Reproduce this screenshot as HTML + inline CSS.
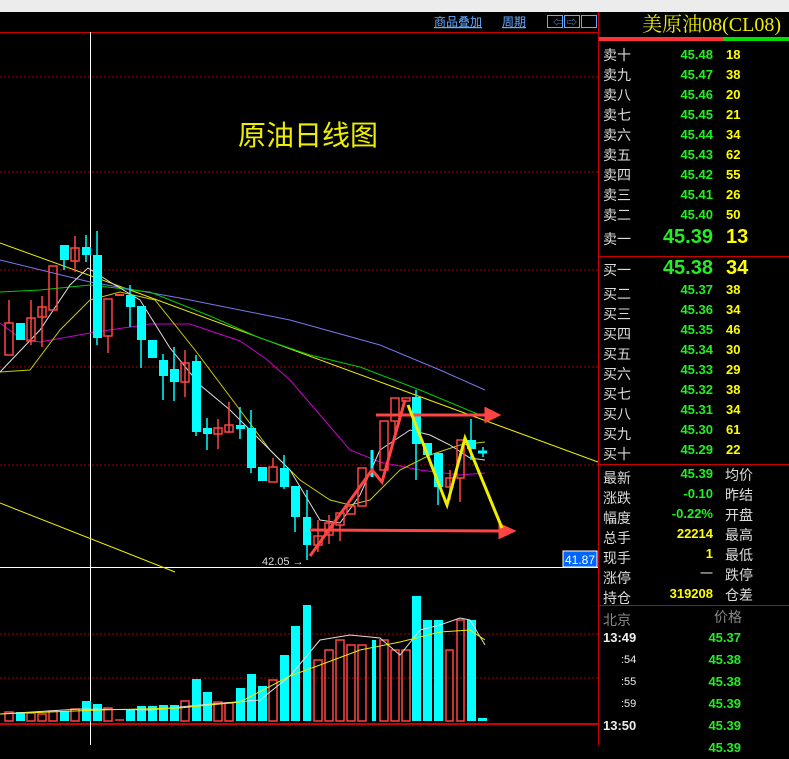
<!DOCTYPE html><html><head><meta charset="utf-8"><style>
body{margin:0;width:789px;height:745px;background:#000;overflow:hidden;font-family:"Liberation Sans","Noto Sans CJK SC",sans-serif}
</style></head><body>
<svg width="789" height="745" style="position:absolute;left:0;top:0" xmlns="http://www.w3.org/2000/svg">
<rect x="0" y="0" width="789" height="12" fill="#ececec"/>
<g stroke="#a00" stroke-dasharray="2,2" stroke-width="1">
<line x1="0" y1="77" x2="598" y2="77"/><line x1="0" y1="172" x2="598" y2="172"/><line x1="0" y1="270" x2="598" y2="270"/><line x1="0" y1="367" x2="598" y2="367"/><line x1="0" y1="465" x2="598" y2="465"/><line x1="0" y1="634" x2="598" y2="634"/><line x1="0" y1="678" x2="598" y2="678"/></g>
<line x1="0" y1="32.5" x2="598" y2="32.5" stroke="#c00"/>
<line x1="598.5" y1="12" x2="598.5" y2="745" stroke="#c00"/>
<line x1="0" y1="567.5" x2="598" y2="567.5" stroke="#fff"/>
<line x1="0" y1="724" x2="598" y2="724" stroke="#c00" stroke-width="2"/>
<line x1="90.5" y1="32" x2="90.5" y2="745" stroke="#fff"/>
<text x="434" y="26" fill="#6af" font-size="12" text-decoration="underline">商品叠加</text>
<text x="502" y="26" fill="#6af" font-size="12" text-decoration="underline">周期</text>
<g fill="none" stroke="#6af"><rect x="547.5" y="15.5" width="15" height="12"/><rect x="564.5" y="15.5" width="15" height="12"/><rect x="581.5" y="15.5" width="15" height="12"/></g>
<text x="553" y="26" fill="#6af" font-size="10">⇦</text><text x="567" y="26" fill="#6af" font-size="10">⇨</text>
<text x="308" y="145" fill="#ee0" font-size="28" text-anchor="middle" font-family="Noto Sans CJK SC">原油日线图</text>
<g fill="none" stroke-width="1">
<polyline stroke="#ee0" points="0,243 130,290 410,393 598,462"/>
<polyline stroke="#ee0" points="0,503 175,572"/>
<polyline stroke="#77e" points="0,260 90,282 180,298 290,320 380,345 440,370 485,390"/>
<polyline stroke="#0c0" points="0,292 40,290 90,285 150,292 210,316 260,338 310,355 360,367 420,390 480,415"/>
<polyline stroke="#c0c" points="0,323 20,338 40,342 90,333 150,324 190,324 240,341 265,358 290,380 320,415 350,450 380,462 420,470 460,475 485,473"/>
<polyline stroke="#cc0" points="0,372 30,370 60,330 90,300 120,292 155,300 195,350 240,410 270,450 300,480 330,500 350,505 370,500 400,470 430,455 460,445 485,442"/>
<polyline stroke="#ddd" points="0,372 40,330 70,285 88,268 110,282 140,300 170,348 200,385 230,410 260,440 290,470 320,520 340,523 360,495 380,450 410,430 430,435 450,445 470,458 485,460"/>
</g>
<g stroke-width="1.5">
<rect x="5" y="323" width="8" height="32" fill="none" stroke="#f44"/><line x1="9" y1="300" x2="9" y2="323" stroke="#f44"/>
<rect x="16" y="323" width="9" height="17" fill="#0ff"/>
<rect x="27" y="318" width="8" height="23" fill="none" stroke="#f44"/><line x1="31" y1="300" x2="31" y2="345" stroke="#f44"/>
<rect x="38" y="307" width="8" height="10" fill="none" stroke="#f44"/><line x1="42" y1="296" x2="42" y2="347" stroke="#f44"/>
<rect x="49" y="266" width="8" height="44" fill="none" stroke="#f44"/>
<rect x="60" y="245" width="9" height="15" fill="#0ff"/><line x1="64" y1="260" x2="64" y2="270" stroke="#0ff"/>
<rect x="71" y="248" width="8" height="13" fill="none" stroke="#f44"/><line x1="75" y1="236" x2="75" y2="272" stroke="#f44"/>
<rect x="82" y="247" width="9" height="8" fill="#0ff"/><line x1="86" y1="235" x2="86" y2="262" stroke="#0ff"/>
<rect x="93" y="255" width="9" height="83" fill="#0ff"/><line x1="97" y1="231" x2="97" y2="345" stroke="#0ff"/>
<rect x="104" y="299" width="8" height="37" fill="none" stroke="#f44"/><line x1="108" y1="336" x2="108" y2="353" stroke="#f44"/>
<line x1="115" y1="295" x2="124" y2="295" stroke="#f44" stroke-width="2"/>
<rect x="126" y="295" width="9" height="12" fill="#0ff"/><line x1="130" y1="285" x2="130" y2="327" stroke="#0ff"/>
<rect x="137" y="306" width="9" height="34" fill="#0ff"/><line x1="141" y1="340" x2="141" y2="368" stroke="#0ff"/>
<rect x="148" y="340" width="9" height="18" fill="#0ff"/>
<rect x="159" y="360" width="9" height="16" fill="#0ff"/><line x1="163" y1="354" x2="163" y2="400" stroke="#0ff"/>
<rect x="170" y="369" width="9" height="13" fill="#0ff"/><line x1="174" y1="347" x2="174" y2="401" stroke="#0ff"/>
<rect x="181" y="363" width="8" height="19" fill="none" stroke="#f44"/><line x1="185" y1="350" x2="185" y2="397" stroke="#f44"/>
<rect x="192" y="361" width="9" height="71" fill="#0ff"/><line x1="196" y1="355" x2="196" y2="436" stroke="#0ff"/>
<rect x="203" y="428" width="9" height="6" fill="#0ff"/><line x1="207" y1="418" x2="207" y2="450" stroke="#0ff"/>
<rect x="214" y="428" width="8" height="6" fill="none" stroke="#f44"/><line x1="218" y1="419" x2="218" y2="449" stroke="#f44"/>
<rect x="225" y="425" width="8" height="7" fill="none" stroke="#f44"/><line x1="229" y1="402" x2="229" y2="433" stroke="#f44"/>
<rect x="236" y="425" width="9" height="4" fill="#0ff"/><line x1="240" y1="407" x2="240" y2="439" stroke="#0ff"/>
<rect x="247" y="428" width="9" height="40" fill="#0ff"/><line x1="251" y1="410" x2="251" y2="473" stroke="#0ff"/>
<rect x="258" y="467" width="9" height="14" fill="#0ff"/>
<rect x="269" y="467" width="8" height="15" fill="none" stroke="#f44"/><line x1="273" y1="458" x2="273" y2="467" stroke="#f44"/>
<rect x="280" y="468" width="9" height="19" fill="#0ff"/><line x1="284" y1="455" x2="284" y2="489" stroke="#0ff"/>
<rect x="291" y="486" width="9" height="31" fill="#0ff"/><line x1="295" y1="517" x2="295" y2="532" stroke="#0ff"/>
<rect x="303" y="517" width="8" height="28" fill="#0ff"/><line x1="307" y1="490" x2="307" y2="560" stroke="#0ff"/>
<rect x="314" y="536" width="8" height="9" fill="none" stroke="#f44"/><line x1="318" y1="520" x2="318" y2="552" stroke="#f44"/>
<rect x="325" y="523" width="8" height="12" fill="none" stroke="#f44"/><line x1="329" y1="515" x2="329" y2="544" stroke="#f44"/>
<rect x="336" y="513" width="8" height="12" fill="none" stroke="#f44"/><line x1="340" y1="525" x2="340" y2="541" stroke="#f44"/>
<rect x="347" y="506" width="8" height="8" fill="none" stroke="#f44"/>
<rect x="358" y="468" width="8" height="38" fill="none" stroke="#f44"/>
<line x1="372" y1="450" x2="372" y2="477" stroke="#0ff" stroke-width="3"/>
<rect x="380" y="421" width="8" height="49" fill="none" stroke="#f44"/>
<rect x="391" y="398" width="8" height="23" fill="none" stroke="#f44"/><line x1="395" y1="421" x2="395" y2="435" stroke="#f44"/>
<rect x="402" y="398" width="8" height="3" fill="none" stroke="#f44"/>
<rect x="412" y="397" width="9" height="47" fill="#0ff"/><line x1="416" y1="390" x2="416" y2="480" stroke="#0ff"/>
<rect x="423" y="443" width="9" height="12" fill="#0ff"/>
<rect x="434" y="453" width="9" height="34" fill="#0ff"/><line x1="438" y1="487" x2="438" y2="505" stroke="#0ff"/>
<rect x="446" y="478" width="7" height="9" fill="none" stroke="#f44"/><line x1="450" y1="470" x2="450" y2="500" stroke="#f44"/>
<rect x="457" y="440" width="7" height="38" fill="none" stroke="#f44"/><line x1="460" y1="478" x2="460" y2="502" stroke="#f44"/>
<rect x="467" y="440" width="9" height="9" fill="#0ff"/><line x1="471" y1="419" x2="471" y2="460" stroke="#0ff"/>
<line x1="478" y1="452" x2="487" y2="452" stroke="#0ff" stroke-width="3"/><line x1="483" y1="447" x2="483" y2="457" stroke="#0ff"/>
</g>
<g stroke="#f44" stroke-width="3" fill="#f44">
<polyline fill="none" points="310,556 372,470 382,482 405,400"/>
<polyline fill="none" points="310,530 500,531"/><polygon points="500,525 513,531 500,537"/>
<polyline fill="none" points="376,415 486,415"/><polygon points="486,409 498,415 486,421"/>
</g>
<g stroke="#ee0" stroke-width="3" fill="none"><polyline points="408,405 447,505 465,438 502,528"/></g>
<text x="262" y="565" fill="#ddd" font-size="11">42.05 →</text>
<rect x="563" y="551" width="34" height="16" fill="#06f" stroke="#fff"/>
<text x="565" y="564" fill="#fff" font-size="12">41.87</text>
<g fill="#0ff">
<rect x="16" y="712" width="9" height="9"/><rect x="60" y="711" width="9" height="10"/><rect x="82" y="701" width="9" height="20"/><rect x="93" y="704" width="9" height="17"/><rect x="126" y="710" width="9" height="11"/><rect x="137" y="706" width="9" height="15"/><rect x="148" y="706" width="9" height="15"/><rect x="159" y="705" width="9" height="16"/><rect x="170" y="705" width="9" height="16"/><rect x="192" y="679" width="9" height="42"/><rect x="203" y="692" width="9" height="29"/><rect x="236" y="688" width="9" height="33"/><rect x="247" y="674" width="9" height="47"/><rect x="258" y="686" width="9" height="35"/><rect x="280" y="655" width="9" height="66"/><rect x="291" y="626" width="9" height="95"/><rect x="303" y="605" width="8" height="116"/><rect x="372" y="640" width="4" height="81"/><rect x="412" y="596" width="9" height="125"/><rect x="423" y="620" width="9" height="101"/><rect x="434" y="620" width="9" height="101"/><rect x="467" y="620" width="9" height="101"/><rect x="478" y="718" width="9" height="3"/>
</g>
<g fill="none" stroke="#f44" stroke-width="1.5">
<rect x="5" y="712" width="8" height="9"/><rect x="27" y="713" width="8" height="8"/><rect x="38" y="714" width="8" height="7"/><rect x="49" y="711" width="8" height="10"/><rect x="71" y="709" width="8" height="12"/><rect x="104" y="708" width="8" height="13"/><line x1="115" y1="720" x2="124" y2="720"/><rect x="181" y="701" width="8" height="20"/><rect x="214" y="702" width="8" height="19"/><rect x="225" y="703" width="8" height="18"/><rect x="269" y="680" width="8" height="41"/>
<rect x="314" y="660" width="8" height="61"/><rect x="325" y="650" width="8" height="71"/><rect x="336" y="640" width="8" height="81"/><rect x="347" y="645" width="8" height="76"/><rect x="358" y="645" width="8" height="76"/><rect x="380" y="640" width="8" height="81"/><rect x="391" y="650" width="8" height="71"/><rect x="402" y="650" width="8" height="71"/><rect x="446" y="650" width="7" height="71"/><rect x="457" y="620" width="7" height="101"/>
</g>
<polyline fill="none" stroke="#ddd" points="0,714 80,709 150,710 200,705 260,700 290,676 320,640 350,635 380,638 400,655 420,630 440,625 460,618 470,620 485,645"/>
<polyline fill="none" stroke="#ee0" points="0,714 100,710 180,708 240,702 290,676 320,665 360,650 400,642 440,632 470,630 485,640"/>
<rect x="599" y="37" width="124" height="4" fill="#f33"/><rect x="723" y="37" width="66" height="4" fill="#0d0"/>
<line x1="598" y1="256.5" x2="789" y2="256.5" stroke="#c00"/>
<line x1="598" y1="464.5" x2="789" y2="464.5" stroke="#c00"/>
<line x1="598" y1="605.5" x2="789" y2="605.5" stroke="#c00"/>
<text x="781" y="31" fill="#ee0" font-size="20" text-anchor="end" font-family="Liberation Serif,Noto Serif CJK SC,serif">美原油08(CL08)</text>
</svg>
<div style="position:absolute;left:603px;top:45px;font-size:14px;line-height:20px;color:#ddd">
<div>卖十</div><div>卖九</div><div>卖八</div><div>卖七</div><div>卖六</div><div>卖五</div><div>卖四</div><div>卖三</div><div>卖二</div>
<div style="margin-top:4px">卖一</div>
<div style="margin-top:11px">买一</div>
<div style="margin-top:4px">买二</div><div>买三</div><div>买四</div><div>买五</div><div>买六</div><div>买七</div><div>买八</div><div>买九</div><div>买十</div>
<div style="margin-top:4px">最新</div><div>涨跌</div><div>幅度</div><div>总手</div><div>现手</div><div>涨停</div><div>持仓</div>
<div style="margin-top:2px;color:#888">北京</div></div>
<div style="position:absolute;left:640px;width:73px;top:45px;text-align:right;font-size:13px;font-weight:bold;line-height:20px;color:#2e2">
<div>45.48</div><div>45.47</div><div>45.46</div><div>45.45</div><div>45.44</div><div>45.43</div><div>45.42</div><div>45.41</div><div>45.40</div>
<div style="font-size:20px;line-height:24px">45.39</div>
<div style="font-size:20px;line-height:24px;margin-top:7px">45.38</div>
<div>45.37</div><div>45.36</div><div>45.35</div><div>45.34</div><div>45.33</div><div>45.32</div><div>45.31</div><div>45.30</div><div>45.29</div>
<div style="margin-top:4px">45.39</div><div>-0.10</div><div>-0.22%</div><div style="color:#ff0">22214</div><div style="color:#ff0">1</div><div style="color:#ddd;font-weight:normal">一</div><div style="color:#ff0">319208</div></div>
<div style="position:absolute;left:726px;top:45px;font-size:13px;font-weight:bold;line-height:20px;color:#ff0">
<div>18</div><div>38</div><div>20</div><div>21</div><div>34</div><div>62</div><div>55</div><div>26</div><div>50</div>
<div style="font-size:20px;line-height:24px">13</div>
<div style="font-size:20px;line-height:24px;margin-top:7px">34</div>
<div>38</div><div>34</div><div>46</div><div>30</div><div>29</div><div>38</div><div>34</div><div>61</div><div>22</div></div>
<div style="position:absolute;left:725px;top:465px;font-size:14px;line-height:20px;color:#ddd">
<div>均价</div><div>昨结</div><div>开盘</div><div>最高</div><div>最低</div><div>跌停</div><div>仓差</div><div style="margin-top:2px;color:#888;margin-left:-11px">价格</div></div>
<div style="position:absolute;left:603px;top:627px;font-size:13px;line-height:22px;color:#eee;font-weight:bold">
<div>13:49</div><div style="font-weight:normal;font-size:11px;padding-left:18px">:54</div><div style="font-weight:normal;font-size:11px;padding-left:18px">:55</div><div style="font-weight:normal;font-size:11px;padding-left:18px">:59</div><div>13:50</div></div>
<div style="position:absolute;left:700px;width:41px;text-align:right;top:627px;font-size:13px;line-height:22px;color:#2e2;font-weight:bold">
<div>45.37</div><div>45.38</div><div>45.38</div><div>45.39</div><div>45.39</div><div>45.39</div></div>
</body></html>
